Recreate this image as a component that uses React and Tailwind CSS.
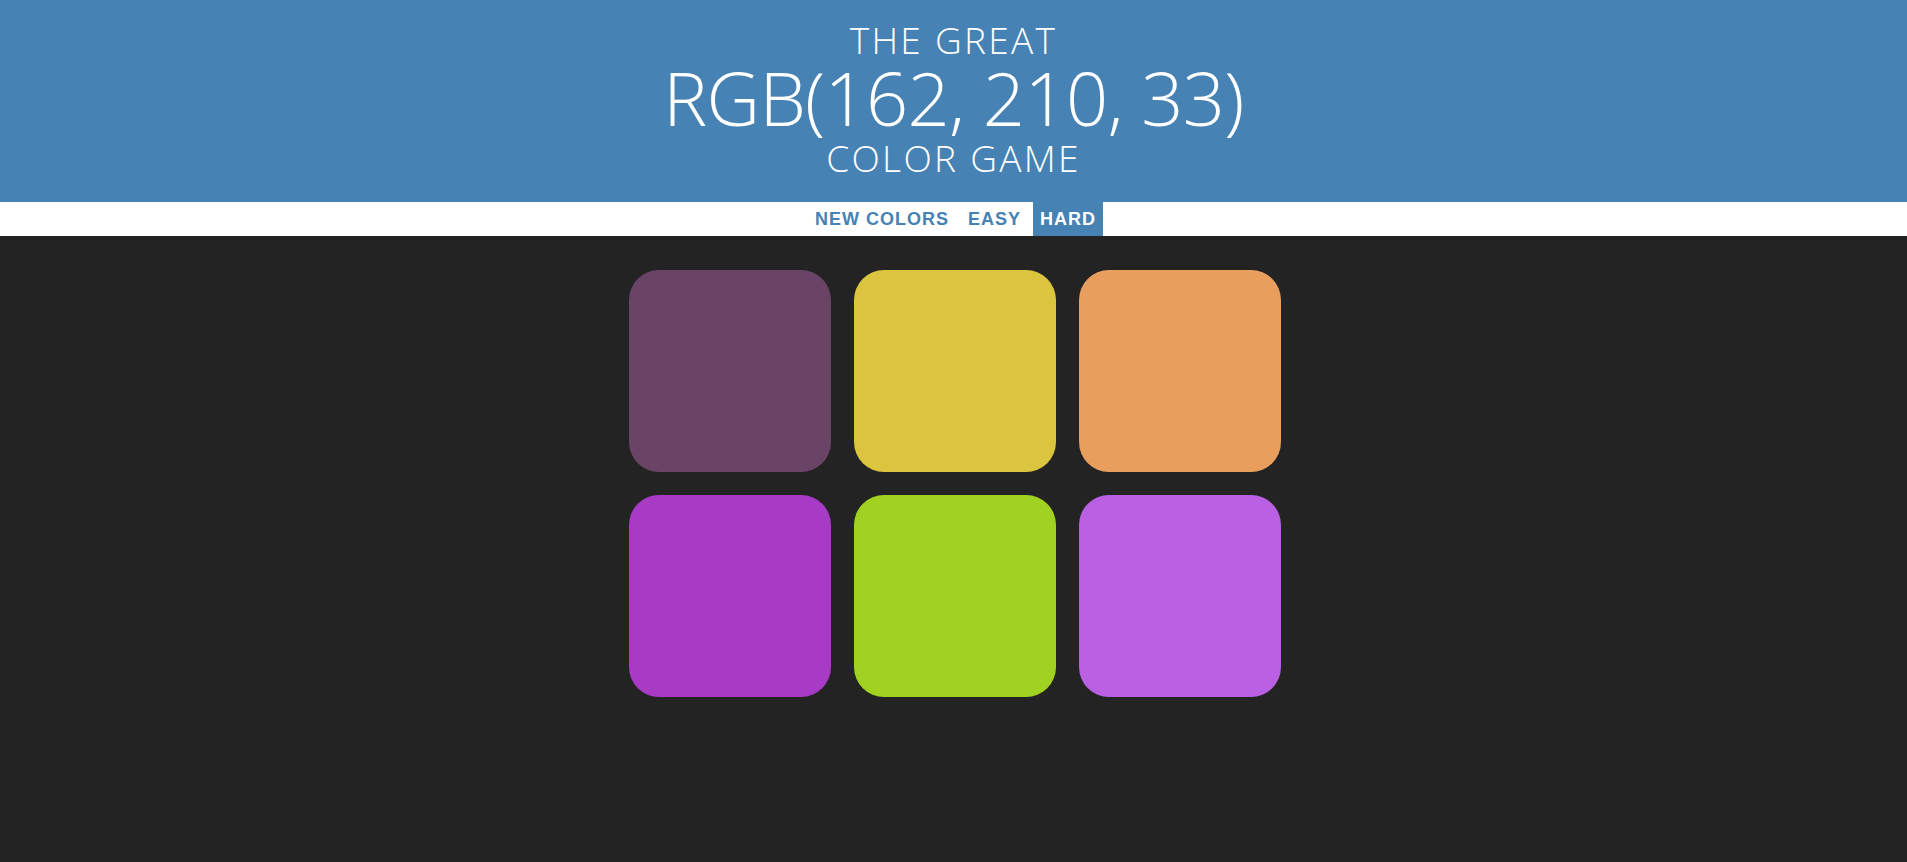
import React, { useState } from 'react';

const colors = [
    'rgb(106, 68, 102)',
    'rgb(219, 196, 62)',
    'rgb(232, 159, 93)',
    'rgb(167, 59, 198)',
    'rgb(162, 210, 33)',
    'rgb(184, 96, 225)',
];

export default function App() {
    const [mode, setMode] = useState('hard');

    return (
        <div className="min-h-screen bg-[#232323]">
            {/* Header */}
            <h1 className="bg-[#4682b4] text-white text-center uppercase font-light pt-[20px] pb-[23px] font-['Open_Sans',sans-serif]">
                <div className="text-[37px] leading-[40px] tracking-[2.3px]">The Great</div>
                <div className="text-[74px] leading-[76px] tracking-[-0.7px]">RGB(162, 210, 33)</div>
                <div className="text-[37px] leading-[43px] tracking-[2.3px]">Color Game</div>
            </h1>

            {/* Stripe */}
            <div className="bg-white h-[34px] flex justify-center gap-[5px] pl-[4px] font-['Liberation_Sans',Arial,sans-serif]">
                <button className="px-[7px] h-full uppercase font-bold text-[18px] tracking-[1px] text-[#4682b4]">
                    New Colors
                </button>
                <button
                    onClick={() => setMode('easy')}
                    className={`px-[7px] h-full uppercase font-bold text-[18px] tracking-[1px] ${mode === 'easy' ? 'bg-[#4682b4] text-white' : 'text-[#4682b4]'}`}
                >
                    Easy
                </button>
                <button
                    onClick={() => setMode('hard')}
                    className={`px-[7px] h-full uppercase font-bold text-[18px] tracking-[1px] ${mode === 'hard' ? 'bg-[#4682b4] text-white' : 'text-[#4682b4]'}`}
                >
                    Hard
                </button>
            </div>

            {/* Squares */}
            <div className="flex justify-center pt-[34px]">
                <div className="grid grid-cols-[repeat(3,202px)] gap-[23px] translate-x-[1px]">
                    {colors.map((c) => (
                        <div key={c} className="w-[202px] h-[202px] rounded-[30px]" style={{ backgroundColor: c }} />
                    ))}
                </div>
            </div>
        </div>
    );
}
